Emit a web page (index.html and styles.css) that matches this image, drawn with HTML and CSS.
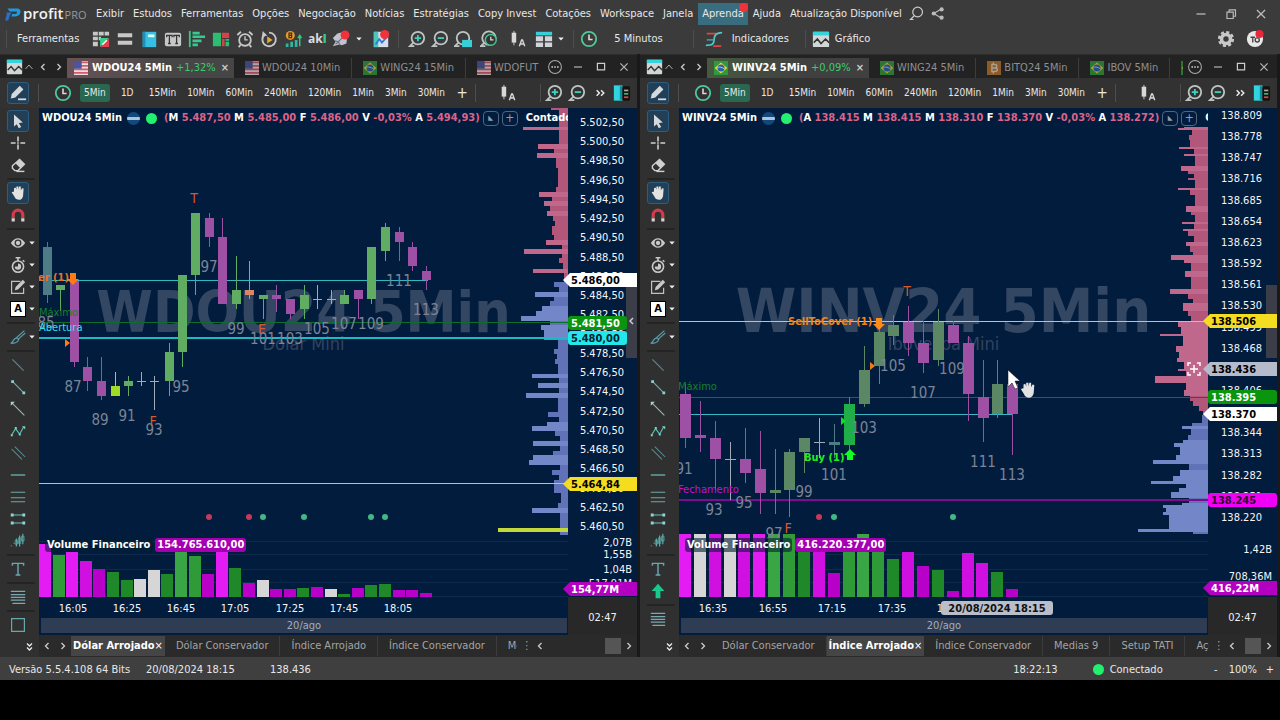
FILE: index.html
```html
<!DOCTYPE html>
<html lang="pt-BR">

<head>
    <meta charset="UTF-8">
    <meta name="viewport" content="width=device-width, initial-scale=1">
    <title>Profit Pro</title>
    <link rel="stylesheet" href="styles.css">
</head>

<body>
    <svg class="sprite" aria-hidden="true">
        <symbol id="logo" viewBox="0 0 20 20"><path d="M3 3h12c4 0 5 3 4 6s-4 4-7 4H8l1-3h4c2 0 3-3 1-3H6z" fill="#1e9be0"/><path d="M2 8h6l-2 4-2 6H0l2-6z" fill="#2a6fd0"/></symbol>
        <symbol id="search" viewBox="0 0 20 20"><g fill="none" stroke="#ccc" stroke-width="1.6"><circle cx="11.5" cy="8" r="6.5"/><path d="M7 13L2 18h4"/></g></symbol>
        <symbol id="share" viewBox="0 0 20 20"><path d="M15 4L5 10l10 6" fill="none" stroke="#bbb" stroke-width="1.6"/><g fill="#bbb"><circle cx="15.5" cy="4.5" r="2.8"/><circle cx="5" cy="10" r="2.8"/><circle cx="15.5" cy="15.5" r="2.8"/></g></symbol>
        <symbol id="min" viewBox="0 0 20 20"><path d="M5 10h10" stroke="#bbb" stroke-width="1.4"/></symbol>
        <symbol id="max" viewBox="0 0 20 20"><path d="M5.5 5.5h9v8h-9z" fill="none" stroke="#ccc" stroke-width="1.5"/></symbol>
        <symbol id="restore" viewBox="0 0 20 20"><path d="M5.5 8h7v7h-7zM8 8V5.5h7v7h-2.500" fill="none" stroke="#bbb" stroke-width="1.3"/></symbol>
        <symbol id="close" viewBox="0 0 20 20"><path d="M5.5 5.5l9 9m0-9l-9 9" stroke="#bbb" stroke-width="1.4"/></symbol>
        <symbol id="dots" viewBox="0 0 20 20"><circle cx="10" cy="10" r="8" fill="none" stroke="#aaa" stroke-width="1.3"/><path d="M5.5 9.200h2v1.800h-2zm3.500 0h2v1.800H9zm3.500 0h2v1.800h-2z" fill="#ccc"/></symbol>
        <symbol id="boxes" viewBox="0 0 20 20"><path d="M1 2h5.500v4H1zM7.500 2H13v4H7.500zM14 2h5v4h-5zM1 7.500h5.500v4H1zM1 13h5.500v5H1zM7.500 7.500H10v4H7.500z" fill="#c8c8c8"/><path d="M9 9h10L9 19z" fill="#35d08c"/><path d="M19 9v10H9z" fill="#e2404c"/><path d="M11.5 16.500l5-5" stroke="#fff" stroke-width="1.5"/></symbol>
        <symbol id="rows" viewBox="0 0 20 20"><path d="M2 3.5h16v4.500H2zM2 12h16v4.500H2z" fill="#c8c8c8"/></symbol>
        <symbol id="book" viewBox="0 0 20 20"><path d="M3 2h15v17H3z" fill="#36bfe2"/><path d="M3 2h3v17H3z" fill="#1f8fb8"/><path d="M9 5h7v3H9z" fill="#e8ffff"/></symbol>
        <symbol id="tt" viewBox="0 0 20 20"><rect x="1" y="3" width="18" height="15" rx="2" fill="#c8c8c8"/><path d="M3 8V6h6v2M6 6v9M4.5 15h3M11 8V6h6v2M14 6v9M12.5 15h3" stroke="#333" stroke-width="1.4" fill="none"/></symbol>
        <symbol id="bars" viewBox="0 0 20 20"><path d="M2 1v18" stroke="#36c98a" stroke-width="2"/><path d="M5 2h8v3H5zM5 6h14v3H5zM5 10.5h10v3H5zM5 15h6v3H5z" fill="#38c990"/></symbol>
        <symbol id="heat" viewBox="0 0 20 20"><path d="M1 3h9v15H1zM15 13h4v5h-4z" fill="#2dbd71"/><path d="M11 3h8v6h-8zM11 10h3v8h-3z" fill="#d8404c"/><path d="M15 10h4v2h-4z" fill="#2dbd71"/></symbol>
        <symbol id="alarm" viewBox="0 0 20 20"><g fill="none" stroke="#c8c8c8" stroke-width="2"><circle cx="10" cy="11" r="6.5"/><path d="M1.5 5.500l4-3.500M18.500 5.500l-4-3.500M5 16.500l-2 2.500M15 16.500l2 2.500"/><path d="M10 7v4h3" stroke-width="1.5"/></g></symbol>
        <symbol id="replay" viewBox="0 0 20 20"><path d="M5 5a7.500 7.500 0 1 0 5-2" fill="none" stroke="#c8c8c8" stroke-width="2"/><path d="M3 1l5 5-6 2z" fill="#c8c8c8"/><path d="M8 7l6 4-6 4z" fill="#e0a93c"/></symbol>
        <symbol id="coin" viewBox="0 0 20 20"><circle cx="7" cy="6" r="5" fill="#e59a2c"/><path d="M5.5 3.500h3v5h-3zM5.500 6h3" fill="none" stroke="#3a2a10" stroke-width="1.2"/><path d="M2 15h3v4H2zM7 13h3v6H7zM12 11h3v8h-3z" fill="#33b5a0"/><path d="M17.5 18V7m-2 2l2-3 2 3" stroke="#38c97c" stroke-width="1.6" fill="none"/></symbol>
        <symbol id="rocket" viewBox="0 0 20 20"><path d="M1 18l3-5-3-4 5-5 8-2 3 5-1 8-5 2-3-1z" fill="#bfc4d0"/><path d="M4 16l7-7M3 12l4 1 2 4" stroke="#6a7282" stroke-width="1.3" fill="none"/><circle cx="14.5" cy="5.5" r="5" fill="#f0323c"/></symbol>
        <symbol id="news" viewBox="0 0 20 20"><path d="M2 2h16v17H2z" fill="#d9dfe8"/><path d="M2 2h5v17H2z" fill="#4cc6b8"/><path d="M4 16l4-6 3 4 6-7" stroke="#2d7be0" stroke-width="2" fill="none"/><circle cx="14" cy="5" r="5" fill="#f0323c"/></symbol>
        <symbol id="zoomin" viewBox="0 0 20 20"><g fill="none" stroke="#bfc4c4" stroke-width="2"><circle cx="11" cy="9" r="7"/><path d="M6 14l-4 4h5"/></g><path d="M11 5.5v7M7.5 9h7" stroke="#3cd0c0" stroke-width="2"/></symbol>
        <symbol id="zoomout" viewBox="0 0 20 20"><g fill="none" stroke="#bfc4c4" stroke-width="2"><circle cx="11" cy="9" r="7"/><path d="M6 14l-4 4h5"/></g><path d="M7.5 9h7" stroke="#3cd0c0" stroke-width="2"/></symbol>
        <symbol id="zoombox" viewBox="0 0 20 20"><g fill="none" stroke="#bfc4c4" stroke-width="2"><circle cx="10" cy="9" r="7"/><path d="M5 14l-4 4h5"/></g><path d="M9 11h11v8H9z" fill="#38d0d8"/></symbol>
        <symbol id="zoomclock" viewBox="0 0 20 20"><g fill="none" stroke="#bfc4c4" stroke-width="2"><circle cx="10" cy="9" r="7.5"/><path d="M5 14l-4 4h5"/></g><circle cx="12" cy="11" r="6" fill="#333" stroke="#3cc98e" stroke-width="1.6"/><path d="M12 7.500V11h3" stroke="#ddd" stroke-width="1.4" fill="none"/></symbol>
        <symbol id="candle" viewBox="0 0 20 20"><path d="M5.5 1v16" stroke="#d8d8d8"/><path d="M3 3h5v11H3z" fill="#d8d8d8"/><path d="M11.5 18l2.500-7h1l2.500 7M12.500 15.500h4" stroke="#d8d8d8" stroke-width="1.5" fill="none"/></symbol>
        <symbol id="grid" viewBox="0 0 20 20"><path d="M1 2h18v4H1z" fill="#38d0d8"/><path d="M1 7h8v5.500H1zM11 7h8v5.500h-8zM1 14h8v5H1zM11 14h8v5h-8z" fill="#d0d4d8"/></symbol>
        <symbol id="clock" viewBox="0 0 20 20"><circle cx="10" cy="10" r="8" fill="none" stroke="#4fc99a" stroke-width="2"/><path d="M10 5v5.500h4" stroke="#d8d8d8" stroke-width="1.8" fill="none"/></symbol>
        <symbol id="indic" viewBox="0 0 20 20"><path d="M2 4h11M9 18h9" stroke="#d8484c" stroke-width="2"/><path d="M1 17c7 0 9-1 9-6s2-8 9-8" fill="none" stroke="#50c8c8" stroke-width="2"/><path d="M2 11h8" fill="none" stroke="#4aa8b8" stroke-width="1.5"/></symbol>
        <symbol id="chart" viewBox="0 0 20 20"><rect x="1" y="2" width="18" height="17" rx="1" fill="#d2d6d6"/><path d="M1 2h18v4H1z" fill="#35d3da"/><path d="M2 14l4-4 4 5 5-5 4 4" stroke="#333" stroke-width="1.7" fill="none"/></symbol>
        <symbol id="gear" viewBox="0 0 20 20"><circle cx="10" cy="10" r="5" fill="none" stroke="#c8c8c8" stroke-width="4"/><circle cx="10" cy="10" r="7.5" fill="none" stroke="#c8c8c8" stroke-width="3" stroke-dasharray="3.4 2.49"/></symbol>
        <symbol id="user" viewBox="0 0 20 20"><circle cx="10" cy="10" r="9" fill="#e8e8e8"/><path d="M5 8h5M7.500 8v6" stroke="#444" stroke-width="1.5"/><circle cx="12.5" cy="11" r="2.3" fill="none" stroke="#444" stroke-width="1.5"/><circle cx="15" cy="4.5" r="4.5" fill="#e8283a"/></symbol>
        <symbol id="us" viewBox="0 0 20 20"><path d="M0 0h20v20H0z" fill="#e9dfe4"/><path d="M0 2h20M0 7h20M0 12h20M0 17h20" stroke="#d65a68" stroke-width="2.4"/><path d="M0 0h11v11H0z" fill="#4c559c"/></symbol>
        <symbol id="br" viewBox="0 0 20 20"><path d="M0 0h20v20H0z" fill="#2f9a3c"/><path d="M10 2l9 8-9 8-9-8z" fill="#e8d83a"/><circle cx="10" cy="10" r="5" fill="#2b5fae"/><path d="M5.5 9c3-1 6 0 9 2" stroke="#dfe" fill="none"/></symbol>
        <symbol id="btc" viewBox="0 0 20 20"><path d="M0 0h20v20H0z" fill="#b8742e"/><path d="M7 4v12M7 5h4c4 0 4 5 0 5H7m4 0c5 0 5 5 0 5H7M9 2v3M9 15v3" stroke="#e8d2b8" stroke-width="2" fill="none"/></symbol>
        <symbol id="left" viewBox="0 0 20 20"><path d="M13 4l-6 6 6 6" fill="none" stroke="#ccc" stroke-width="2.6"/></symbol>
        <symbol id="right" viewBox="0 0 20 20"><path d="M7 4l6 6-6 6" fill="none" stroke="#ccc" stroke-width="2.6"/></symbol>
        <symbol id="up" viewBox="0 0 20 20"><path d="M3 14l7-8 7 8" fill="none" stroke="#aaa" stroke-width="2"/></symbol>
        <symbol id="more" viewBox="0 0 20 20"><path d="M3 4l5 5-5 5M11 4l5 5-5 5" fill="none" stroke="#eee" stroke-width="2.6"/></symbol>
        <symbol id="panel" viewBox="0 0 20 20"><path d="M1 1h10v18H1z" fill="#2fd6e0"/><path d="M8 2h3v16H8z" fill="#128a98"/><rect x="11" y="2" width="9" height="17" rx="2" fill="#16120f"/><path d="M13 7h5" stroke="#aaa" stroke-width="2"/><path d="M13 11h5" stroke="#38b870" stroke-width="2"/><path d="M13 15h5" stroke="#e04848" stroke-width="2"/></symbol>
        <symbol id="caret" viewBox="0 0 20 20"><path d="M1 5h18l-9 10z" fill="#eee"/></symbol>
        <symbol id="pencil" viewBox="0 0 20 20"><path d="M2 16l1-5L12 2l4 4-9 9z" fill="#d5d9dc"/><path d="M10 17h9" stroke="#d5d9dc" stroke-width="2"/></symbol>
        <symbol id="arrow" viewBox="0 0 20 20"><path d="M5 2l11 10-5 .5 3 5-3 1.5-2.500-5L5 17z" fill="#d8d8d8"/></symbol>
        <symbol id="cross" viewBox="0 0 20 20"><path d="M10 2v6M10 12v6M1 10h6M13 10h6" stroke="#d0d0d0" stroke-width="2"/><path d="M9 9h2v2H9z" fill="#d0d0d0"/></symbol>
        <symbol id="eraser" viewBox="0 0 20 20"><path d="M3 11l9-8 6 6-8 8H6l-3-3z" fill="none" stroke="#d0d0d0" stroke-width="1.8"/><path d="M7 8l5-5 6 6-5 5z" fill="#d0d0d0"/><path d="M8 18h10" stroke="#d0d0d0" stroke-width="1.8"/></symbol>
        <symbol id="hand" viewBox="0 0 20 20"><path d="M2 9l3-1V4l2-1 1 3V2h2.500v4l1-4h2v5l1.500-3 2 .5-.5 7c0 4-2 7-5 7s-5-1-6-4z" fill="#e2e2e2"/></symbol>
        <symbol id="magnet" viewBox="0 0 20 20"><path d="M4 14v-4a6 6 0 0 1 12 0v4" fill="none" stroke="#d23c4c" stroke-width="4"/><path d="M2 14h4v4H2zM14 14h4v4h-4z" fill="#d0d0d0"/></symbol>
        <symbol id="eye" viewBox="0 0 20 20"><path d="M1 10c5-8 13-8 18 0-5 8-13 8-18 0z" fill="#c8c8c8"/><circle cx="10" cy="10" r="3.5" fill="#c8c8c8" stroke="#333" stroke-width="1.6"/></symbol>
        <symbol id="watch" viewBox="0 0 20 20"><circle cx="10" cy="12" r="7" fill="none" stroke="#c8c8c8" stroke-width="2"/><path d="M7 1h6M10 1v4M16 4l2 2" stroke="#c8c8c8" stroke-width="2"/><path d="M10 12V8a4 4 0 1 1-4 4z" fill="#c8c8c8"/></symbol>
        <symbol id="note" viewBox="0 0 20 20"><path d="M13 3H2v15h15v-7" fill="none" stroke="#c0c0c0" stroke-width="1.5"/><path d="M6 14l1-4 9-9 3 3-9 9z" fill="#c8c8c8"/></symbol>
        <symbol id="brush" viewBox="0 0 20 20"><path d="M18 2L8 11M19 5l-9 8" stroke="#5a9aa8" stroke-width="1.5"/><path d="M8 11l3 2c-1 4-5 5-10 5 3-1 3-6 7-7z" fill="none" stroke="#5a9aa8" stroke-width="1.5"/></symbol>
        <symbol id="line" viewBox="0 0 20 20"><path d="M3 3l14 14" stroke="#5a8f98" stroke-width="1.3"/></symbol>
        <symbol id="segment" viewBox="0 0 20 20"><path d="M3 3l14 14" stroke="#6fb0b4" stroke-width="1.3"/><path d="M1.5 1.5H5V5H1.500zM15.500 15.500H19V19h-3.500z" fill="#86d0d0"/></symbol>
        <symbol id="ray" viewBox="0 0 20 20"><path d="M3 3l15 15" stroke="#a0b8b8" stroke-width="1.3"/><path d="M1 1h5L1 6z" fill="#b8d0d0"/></symbol>
        <symbol id="zigzag" viewBox="0 0 20 20"><path d="M2 15l5-8 5 7 5-9" fill="none" stroke="#5fb8b0" stroke-width="1.5"/><path d="M1 14h2.500v2.500H1zM6 5h2.500v2.500H6zM11 13h2.500v2.500H11zM15 4h4v4z" fill="#7fd0c8"/></symbol>
        <symbol id="channel" viewBox="0 0 20 20"><path d="M2 5l13 13M6 2l13 13" stroke="#5a8f98" stroke-width="1.3"/></symbol>
        <symbol id="hline" viewBox="0 0 20 20"><path d="M1 10h18" stroke="#6fc0c0" stroke-width="1.5"/></symbol>
        <symbol id="hlines" viewBox="0 0 20 20"><path d="M1 4h18M1 11h18M1 16h18" stroke="#6fa8a8" stroke-width="1.4"/></symbol>
        <symbol id="range" viewBox="0 0 20 20"><path d="M2 5h16M2 15h16" stroke="#6fc0c0" stroke-width="1.4"/><path d="M1 3h3.500v4H1zM15.500 3H19v4h-3.500zM1 13h3.500v4H1zM15.500 13H19v4h-3.500z" fill="#8fd8d8"/></symbol>
        <symbol id="waves" viewBox="0 0 20 20"><path d="M1 16h1M4.5 13h1M8 7v10M12 3v14M16 1v13" stroke="#5aa8a8" stroke-width="1.5"/><path d="M6.5 9h3v5h-3zM10.500 6h3v7h-3zM14.500 4h3v6h-3z" fill="none" stroke="#5aa8a8"/></symbol>
        <symbol id="text" viewBox="0 0 20 20"><path d="M3 6V3h14v3M10 3v14M7 17.500h6" fill="none" stroke="#68a8b0" stroke-width="1.8"/></symbol>
        <symbol id="fib" viewBox="0 0 20 20"><path d="M1 3h18M1 7h18M1 10.500h18M1 14h18M3 18h16" stroke="#78a8b0" stroke-width="1.5"/></symbol>
        <symbol id="square" viewBox="0 0 20 20"><path d="M2 2h16v16H2z" fill="none" stroke="#68a8a8" stroke-width="1.5"/></symbol>
        <symbol id="greenup" viewBox="0 0 20 20"><path d="M10 1l8 9h-5v9H7v-9H2z" fill="#17c98a"/></symbol>
    </svg>

    <header>
        <nav class="menu">
            <svg class="logo"><use href="#logo"/></svg>
            <span class="brand">profit<small>PRO</small></span>
            <button>Exibir</button>
            <button>Estudos</button>
            <button>Ferramentas</button>
            <button>Opções</button>
            <button>Negociação</button>
            <button>Notícias</button>
            <button>Estratégias</button>
            <button>Copy Invest</button>
            <button>Cotações</button>
            <button>Workspace</button>
            <button>Janela</button>
            <button class="learn">Aprenda</button>
            <button>Ajuda</button>
            <button>Atualização Disponível</button>
            <button class="icon" aria-label="Buscar"><svg><use href="#search"/></svg></button>
            <button class="icon" aria-label="Compartilhar"><svg><use href="#share"/></svg></button>
            <span class="space"></span>
            <button class="win" aria-label="Minimizar"><svg><use href="#min"/></svg></button>
            <button class="win" aria-label="Restaurar"><svg><use href="#restore"/></svg></button>
            <button class="win" aria-label="Fechar"><svg><use href="#close"/></svg></button>
        </nav>
        <div class="toolbar">
            <i class="sep"></i>
            <button class="label first">Ferramentas</button>
            <div class="group">
                <button aria-label="Grade"><svg><use href="#boxes"/></svg></button>
                <button aria-label="Boleta"><svg><use href="#rows"/></svg></button>
                <button aria-label="Livro"><svg><use href="#book"/></svg></button>
                <button aria-label="Times and trades"><svg><use href="#tt"/></svg></button>
                <button aria-label="Volume"><svg><use href="#bars"/></svg></button>
                <button aria-label="Mapa"><svg><use href="#heat"/></svg></button>
                <button aria-label="Alarme"><svg><use href="#alarm"/></svg></button>
                <button aria-label="Replay"><svg><use href="#replay"/></svg></button>
                <button aria-label="Moedas"><svg><use href="#coin"/></svg></button>
                <button class="akl">ak<b>l</b></button>
                <button aria-label="Foguete"><svg><use href="#rocket"/></svg></button>
                <button class="drop" aria-label="Mais"><svg><use href="#caret"/></svg></button>
            </div>
            <button aria-label="Relatório"><svg><use href="#news"/></svg></button>
            <i class="sep"></i>
            <button aria-label="Aumentar"><svg><use href="#zoomin"/></svg></button>
            <button aria-label="Diminuir"><svg><use href="#zoomout"/></svg></button>
            <button aria-label="Zoom na área"><svg><use href="#zoombox"/></svg></button>
            <button class="wide" aria-label="Zoom no tempo"><svg><use href="#zoomclock"/></svg></button>
            <button class="wide" aria-label="Tipo de gráfico"><svg><use href="#candle"/></svg></button>
            <button aria-label="Layout"><svg><use href="#grid"/></svg></button>
            <button class="drop" aria-label="Mais layouts"><svg><use href="#caret"/></svg></button>
            <i class="sep"></i>
            <button class="label period"><svg><use href="#clock"/></svg>5 Minutos</button>
            <i class="sep"></i>
            <button class="label indicators"><svg><use href="#indic"/></svg>Indicadores</button>
            <i class="sep"></i>
            <button class="label chart"><svg><use href="#chart"/></svg>Gráfico</button>
            <span class="space"></span>
            <button class="wide" aria-label="Configurações"><svg><use href="#gear"/></svg></button>
            <button class="wide" aria-label="Conta"><svg><use href="#user"/></svg></button>
        </div>
    </header>

    <main>
        <section class="panel" data-chart="wdo">
            <div class="tabs">
                <button class="nav chart" aria-label="Gráfico"><svg><use href="#chart"/></svg></button>
                <button class="nav small" aria-label="Subir"><svg><use href="#up"/></svg></button>
                <button class="nav" aria-label="Anterior"><svg><use href="#left"/></svg></button>
                <button class="nav" aria-label="Próximo"><svg><use href="#right"/></svg></button>
                <div class="tab-list">
                    <button class="tab active us"><svg><use href="#us"/></svg>WDOU24 5Min <em>+1,32%</em><span>×</span></button>
                    <button class="tab"><svg><use href="#us"/></svg>WDOU24 10Min</button>
                    <button class="tab"><svg><use href="#br"/></svg>WING24 15Min</button>
                    <button class="tab"><svg><use href="#us"/></svg>WDOFUT</button>
                </div>
                <div class="controls"></div>
            </div>
            <div class="timeframes"></div>
            <div class="body">
                <aside></aside>
                <div class="plot">
                    <div class="info">
                        <strong>WDOU24 5Min</strong><i class="badge"></i><i class="live"></i>
                        <p>(<b>M</b> 5.487,50 <b>M</b> 5.485,00 <b>F</b> 5.486,00 <b>V</b> -0,03% <b>A</b> 5.494,93)</p>
                        <button aria-label="Recolher">◣</button><button aria-label="Adicionar">+</button>
                        <strong class="study">Contador</strong>
                    </div>
                    <svg class="drawing"></svg>
                    <div class="volume"><b>Volume Financeiro</b><b class="value">154.765.610,00</b></div>
                    <svg class="hours"></svg>
                    <div class="day">20/ago</div>
                </div>
                <div class="axis">
                    <svg></svg>
                    <time>02:47</time>
                </div>
                <div class="sheets">
                    <button class="nav" aria-label="Anterior"><svg><use href="#left"/></svg></button>
                    <button class="nav" aria-label="Próximo"><svg><use href="#right"/></svg></button>
                    <div class="sheet-list">
                        <button class="active">Dólar Arrojado<span>×</span></button>
                        <button>Dólar Conservador</button>
                        <button>Índice Arrojado</button>
                        <button>Índice Conservador</button>
                        <button>Medias 9</button>
                    </div>
                    <div class="scroll"></div>
                </div>
            </div>
        </section>

        <section class="panel" data-chart="win">
            <div class="tabs">
                <button class="nav chart" aria-label="Gráfico"><svg><use href="#chart"/></svg></button>
                <button class="nav small" aria-label="Subir"><svg><use href="#up"/></svg></button>
                <button class="nav" aria-label="Anterior"><svg><use href="#left"/></svg></button>
                <button class="nav" aria-label="Próximo"><svg><use href="#right"/></svg></button>
                <div class="tab-list">
                    <button class="tab active br"><svg><use href="#br"/></svg>WINV24 5Min <em>+0,09%</em><span>×</span></button>
                    <button class="tab"><svg><use href="#br"/></svg>WING24 5Min</button>
                    <button class="tab"><svg><use href="#btc"/></svg>BITQ24 5Min</button>
                    <button class="tab"><svg><use href="#br"/></svg>IBOV 5Min</button>
                    <button class="tab" aria-label="Próxima aba"><svg><use href="#br"/></svg></button>
                </div>
                <div class="controls"></div>
            </div>
            <div class="timeframes"></div>
            <div class="body">
                <aside></aside>
                <div class="plot">
                    <div class="info">
                        <strong>WINV24 5Min</strong><i class="badge"></i><i class="live"></i>
                        <p>(<b>A</b> 138.415 <b>M</b> 138.415 <b>M</b> 138.310 <b>F</b> 138.370 <b>V</b> -0,03% <b>A</b> 138.272)</p>
                        <button aria-label="Recolher">◣</button><button aria-label="Adicionar">+</button>
                        <strong class="study">Contador</strong>
                    </div>
                    <svg class="drawing"></svg>
                    <div class="volume"><b>Volume Financeiro</b><b class="value">416.220.377,00</b></div>
                    <svg class="hours"></svg>
                    <div class="day">20/ago</div>
                </div>
                <div class="axis">
                    <svg></svg>
                    <time>02:47</time>
                </div>
                <div class="sheets">
                    <button class="nav" aria-label="Anterior"><svg><use href="#left"/></svg></button>
                    <button class="nav" aria-label="Próximo"><svg><use href="#right"/></svg></button>
                    <div class="sheet-list">
                        <button>Dólar Conservador</button>
                        <button class="active">Índice Arrojado<span>×</span></button>
                        <button>Índice Conservador</button>
                        <button>Medias 9</button>
                        <button>Setup TATI</button>
                        <button>Açoes</button>
                    </div>
                    <div class="scroll"></div>
                </div>
            </div>
        </section>
    </main>

    <footer>
        <span class="version">Versão 5.5.4.108 64 Bits</span>
        <span class="date">20/08/2024 18:15</span>
        <span>138.436</span>
        <span class="space"></span>
        <span class="hour">18:22:13</span>
        <i class="live"></i>
        <span class="status">Conectado</span>
        <button>-</button>
        <span>100%</span>
        <button>+</button>
    </footer>

    <template id="timeframes">
        <button class="tool on" aria-label="Desenhar"><svg><use href="#pencil"/></svg></button>
        <i class="sep"></i>
        <button class="clock" aria-label="Periodicidade"><svg><use href="#clock"/></svg></button>
        <button class="on">5Min</button>
        <button>1D</button>
        <button>15Min</button>
        <button>10Min</button>
        <button>60Min</button>
        <button>240Min</button>
        <button>120Min</button>
        <button>1Min</button>
        <button>3Min</button>
        <button>30Min</button>
        <button class="plus">+</button>
        <i class="sep"></i>
        <span class="space"></span>
        <button class="pic" aria-label="Candles"><svg><use href="#candle"/></svg></button>
        <span class="space"></span>
        <i class="sep"></i>
        <button class="pic" aria-label="Aumentar"><svg><use href="#zoomin"/></svg></button>
        <button class="pic" aria-label="Diminuir"><svg><use href="#zoomout"/></svg></button>
        <button class="pic more" aria-label="Mais"><svg><use href="#more"/></svg></button>
        <button class="pic last" aria-label="Painel"><svg><use href="#panel"/></svg></button>
    </template>

    <template id="controls">
        <button aria-label="Mais abas"><svg><use href="#dots"/></svg></button>
        <button aria-label="Minimizar"><svg><use href="#min"/></svg></button>
        <button aria-label="Maximizar"><svg><use href="#max"/></svg></button>
        <button aria-label="Fechar"><svg><use href="#close"/></svg></button>
    </template>

    <template id="scroll">
        <span>⋮</span>
        <button class="nav" aria-label="Rolar à esquerda"><svg><use href="#left"/></svg></button>
        <span class="space"></span>
        <i class="thumb"></i>
        <button class="nav" aria-label="Rolar à direita"><svg><use href="#right"/></svg></button>
    </template>

    <script src="script.js"></script>
</body>

</html>
```
FILE: styles.css
```css
* {
    box-sizing: border-box;
}

body {
    margin: 0;
    background: #000;
    color: #e8e8e8;
    font-family: "DejaVu Sans Condensed", "DejaVu Sans", sans-serif;
    font-size: 11px;
    line-height: 16px;
}

button {
    display: flex;
    align-items: center;
    justify-content: center;
    flex: none;
    margin: 0;
    padding: 0;
    border: 0;
    background: none;
    color: inherit;
    font: inherit;
    white-space: nowrap;
}

svg {
    display: block;
    flex: none;
    width: 18px;
    height: 18px;
}

.sprite {
    position: absolute;
    width: 0;
    height: 0;
}

.space {
    flex: 1;
}

.sep {
    flex: none;
    width: 1px;
    height: 18px;
    background: #4e4e4e;
}

/* Topo */
header {
    padding-bottom: 3px;
    background: #3b3b3b;
}

.menu {
    display: flex;
    align-items: center;
    gap: 1px;
    height: 27px;
    padding: 0 5px;
}

.menu button {
    height: 22px;
    padding: 0 4px;
}

.menu .logo {
    width: 16px;
    height: 16px;
}

.brand {
    width: 69px;
    padding-left: 1px;
    color: #f2f2f2;
    font-family: "Open Sans", sans-serif;
    font-size: 15px;
    font-weight: 600;
}

.brand small {
    padding-left: 1px;
    color: #999;
    font-size: 11px;
    font-weight: 400;
}

.menu .learn {
    position: relative;
    background: #3a6c80;
}

.learn::after {
    content: "";
    position: absolute;
    top: 0;
    right: 0;
    width: 9px;
    height: 9px;
    border-radius: 50%;
    background: #f0323c;
}

.menu .icon {
    width: 20px;
    padding: 0;
}

.menu .icon svg {
    width: 15px;
    height: 15px;
}

.menu .win {
    width: 29px;
    padding: 0;
}

.toolbar {
    display: flex;
    align-items: center;
    height: 24px;
    padding-right: 11px;
}

.toolbar .sep {
    margin: 0 6px;
}

.toolbar button {
    width: 23px;
    height: 22px;
}

.toolbar .group {
    display: flex;
    margin-right: 4px;
}

.toolbar .group button {
    width: 24px;
}

.toolbar .wide {
    width: 29px;
}

.toolbar .drop,
.toolbar .group .drop {
    width: 12px;
}

.toolbar .drop svg {
    width: 6px;
    height: 6px;
}

.toolbar .label {
    width: auto;
}

.toolbar .first {
    padding: 0 10px 0 4px;
}

.toolbar .period {
    gap: 16px;
    padding-right: 24px;
}

.toolbar .indicators {
    gap: 9px;
    padding: 0 10px 0 5px;
}

.toolbar .chart {
    gap: 5px;
}

.toolbar .akl {
    color: #ddd;
    font-family: "Open Sans", sans-serif;
    font-weight: 700;
    font-size: 12px;
}

.akl b {
    color: #38c990;
}

/* Painéis */
main {
    display: grid;
    grid-template-columns: 1fr 1fr;
    gap: 3px;
    padding-right: 3px;
    background: #191919;
}

.panel {
    min-width: 0;
    background: #303030;
}

.tabs {
    display: flex;
    align-items: center;
    height: 24px;
    padding-left: 5px;
    border-top: 1px solid #2c2c2c;
    background: #222;
}

.nav {
    width: 16px;
    height: 20px;
}

.nav svg {
    width: 10px;
    height: 10px;
}

.tabs .chart {
    width: 18px;
}

.tabs .chart svg {
    width: 17px;
    height: 17px;
}

.tabs .small {
    width: 12px;
}

.tab-list {
    display: flex;
    flex: 1;
    align-items: end;
    align-self: stretch;
    overflow: hidden;
    min-width: 0;
}

.tab {
    gap: 3px;
    height: 20px;
    padding: 0 11px;
    color: #8f8f8f;
}

.tab svg {
    width: 14px;
    height: 14px;
    opacity: .7;
}

.tab + .tab + .tab {
    border-left: 1px solid #3c3c3c;
}

.tab.active {
    gap: 4px;
    padding: 0 5px 0 7px;
    background: #464646;
    color: #fff;
    font-weight: 700;
}

.tab.us {
    background: linear-gradient(90deg, #6a5357, #464646 60%);
}

.tab.br {
    background: linear-gradient(90deg, #475a40, #404040 60%);
}

.tab.active svg {
    opacity: 1;
}

.tab em {
    color: #3ccc6c;
    font-style: normal;
    font-weight: 400;
}

.tab span {
    padding-left: 1px;
    color: #ccc;
}

.controls {
    display: flex;
    padding-right: 2px;
}

.controls button {
    width: 23px;
}

.controls svg {
    width: 16px;
    height: 16px;
}

.timeframes {
    display: flex;
    align-items: center;
    gap: 3px;
    height: 30px;
    padding: 0 7px;
    background: #323232;
    font-size: 10px;
}

.timeframes button {
    height: 18px;
    min-width: 29px;
    padding: 0 4px;
    border-radius: 3px;
}

.timeframes button.on {
    background: #2a6750;
}

.timeframes .tool + .sep {
    margin: 0 6px;
}

.timeframes .pic {
    min-width: 20px;
    padding: 0;
}

.timeframes .more svg {
    width: 11px;
    height: 11px;
}

.timeframes .last {
    min-width: 16px;
}

.timeframes .last svg {
    width: 17px;
}

.timeframes .plus {
    min-width: 20px;
    font-size: 15px;
}

.timeframes .tool,
aside .tool {
    width: 22px;
    min-width: 22px;
    height: 22px;
    padding: 0;
}

.timeframes .tool.on,
aside .tool.on {
    border: 1px solid #2d5d80;
    border-radius: 3px;
    background: #213f57;
}

.body {
    display: grid;
    grid-template-columns: 39px 1fr 69px;
}

aside {
    position: relative;
    grid-row: span 2;
    padding: 2px 0 0 7px;
    background: #303030;
}

aside hr {
    width: 28px;
    height: 2px;
    margin: 2px 0;
    border: 0;
    background: #242424;
}

aside div {
    display: flex;
    align-items: center;
}

aside svg {
    width: 16px;
    height: 16px;
}

aside .drop svg {
    width: 6px;
    height: 6px;
}

aside .letter {
    width: 16px;
    height: 16px;
    border: 1px solid #000;
    background: #fff;
    color: #000;
    font-weight: 700;
    line-height: 13px;
}

aside .last {
    position: absolute;
    right: 4px;
    bottom: 4px;
    width: 12px;
    height: 12px;
}

aside .last svg {
    width: 10px;
    height: 10px;
    transform: rotate(90deg);
}

/* Gráfico */
.plot,
.axis {
    position: relative;
    min-width: 0;
    background: #021c3d;
}

.plot {
    overflow: hidden;
}

.info {
    position: absolute;
    top: 2px;
    left: 3px;
    right: 0;
    display: flex;
    align-items: center;
    overflow: hidden;
    color: #fff;
    white-space: nowrap;
}

.info p {
    margin: 0;
    color: #dc6488;
    font-weight: 700;
}

.info p b {
    color: #fff;
}

.info button {
    width: 16px;
    height: 15px;
    margin-left: 3px;
    border: 1px solid #53657f;
    border-radius: 4px;
    color: #8fa0b4;
    font-size: 12px;
    line-height: 12px;
}

.info button:first-of-type {
    font-size: 7px;
}

.info .study {
    margin-left: 8px;
}

.badge {
    flex: none;
    width: 13px;
    height: 13px;
    margin: 0 6px 0 5px;
    border-radius: 50%;
    background: linear-gradient(#12487c 38%, #a8c4dc 38%, #a8c4dc 60%, #12487c 60%);
}

.live {
    flex: none;
    width: 11px;
    height: 11px;
    margin-right: 7px;
    border-radius: 50%;
    background: #24f070;
}

.drawing,
.axis svg {
    width: 100%;
    height: 489px;
}

.axis svg {
    overflow: visible;
}

.hours {
    width: 100%;
    height: 21px;
}

.day {
    height: 15px;
    margin: 0 1px 2px 2px;
    background: #2e3d54;
    color: #a3adbb;
    line-height: 15px;
    text-align: center;
}

.volume {
    position: absolute;
    top: 430px;
    left: 6px;
    display: flex;
    gap: 3px;
    color: #fff;
    line-height: 14px;
}

.volume b {
    padding: 0 2px;
    border-radius: 3px;
    background: rgba(4, 30, 50, .6);
}

.volume .value {
    background: #a400b2;
}

.axis time {
    display: block;
    height: 38px;
    background: #282828;
    color: #f0f0f0;
    line-height: 42px;
    text-align: center;
}

.drawing text,
.hours text,
.axis text {
    font-size: 11px;
    fill: #f4f6fa;
}

.hours text {
    text-anchor: middle;
}

.axis text {
    text-anchor: end;
}

.axis .tag,
.hours .tag,
.drawing .mark {
    font-weight: 700;
}

.axis .tag {
    text-anchor: start;
}

.drawing .count {
    font-size: 15px;
    text-anchor: middle;
    fill: #7c8496;
}

.drawing .letter {
    font-size: 14px;
    text-anchor: middle;
    fill: #d8582c;
}

.drawing .watermark {
    font-weight: 700;
    text-anchor: middle;
    fill: #334763;
}

.drawing .name {
    font-size: 18px;
    text-anchor: middle;
    fill: #32435f;
}

/* Abas inferiores */
.sheets {
    display: flex;
    grid-column: 2 / 4;
    align-items: center;
    height: 22px;
    min-width: 0;
    background: #2a2a2a;
    color: #a4a4a4;
}

.sheet-list {
    display: flex;
    flex: 1;
    overflow: hidden;
    min-width: 0;
}

.sheet-list button {
    height: 20px;
    padding: 0 11px;
    border-right: 1px solid #3c3c3c;
}

.sheet-list .active {
    padding: 0 2px;
    border: 0;
    background: #454545;
    color: #fff;
    font-weight: 700;
}

.sheet-list span {
    font-weight: 400;
}

.scroll {
    display: flex;
    align-items: center;
    width: 120px;
    padding-left: 5px;
}

[data-chart="win"] .scroll {
    width: 68px;
}

.thumb {
    width: 16px;
    height: 16px;
    background: #555;
}

/* Rodapé */
footer {
    display: flex;
    align-items: center;
    height: 23px;
    padding: 2px 3px 0 9px;
    background: #3f3f3f;
}

.version {
    width: 137px;
}

.date {
    width: 124px;
}

.hour {
    margin-right: 35px;
}

footer .live {
    margin-right: 6px;
}

.status {
    margin-right: 46px;
}

footer button {
    width: 14px;
}

footer button + span {
    padding: 0 6px;
}
```
FILE: script.js
```js
const PINK = "#b2567a", BLUE = "#6272b8";
const colors = {
    g: "#5fac62", p: "#9d50a4", t: "#4d7c84", l: "#9edc24", w: "#a0aab8", o: "#d88664",
    s: "#5c8765", b: "#1fae48",
    M: "#e41cf4", m: "#b800c8", n: "#cf10e0", G: "#3aa544", v: "#1f8828", h: "#2f9a38", W: "#d6d6d6"
};

// Candles: [x, color, high, open, close, low], volume: [top, color], profile: [y, width]
const charts = {
    wdo: {
        name: "WDOU24 5Min", company: "Dólar Mini", size: 57, markY: 224, step: 13.6, body: 9, bar: 12,
        candles: [[8, "t", 134, 139, 187, 195], [21, "g", 177, 177, 182, 203], [35, "p", 173, 173, 254, 259], [48, "p", 249, 259, 273, 283],
            [62, "p", 249, 273, 288, 292], [76, "l", 264, 278, 288, 288], [89, "g", 268, 273, 278, 288], [102, "w", 264, 273, 274, 278],
            [115, "w", 268, 273, 274, 302], [130, "g", 235, 244, 273, 288], [143, "g", 167, 167, 244, 259], [156, "g", 105, 105, 167, 187],
            [170, "p", 105, 110, 129, 139], [183, "p", 110, 129, 196, 196], [197, "g", 148, 182, 196, 201], [210, "o", 153, 182, 187, 191],
            [224, "g", 187, 187, 191, 211], [237, "p", 177, 187, 191, 204], [251, "p", 191, 191, 206, 211], [265, "g", 177, 187, 201, 211],
            [278, "w", 177, 191, 192, 201], [292, "w", 182, 191, 192, 196], [305, "g", 182, 187, 196, 196], [319, "p", 182, 182, 191, 211],
            [332, "g", 139, 139, 191, 196], [346, "g", 115, 119, 143, 153], [360, "p", 119, 124, 134, 153], [373, "p", 134, 139, 158, 163],
            [387, "p", 158, 163, 172, 182]],
        volume: [[436, "M"], [447, "h"], [444, "M"], [453, "n"], [461, "m"], [464, "v"], [472, "v"], [471, "W"], [462, "W"], [466, "v"],
            [444, "G"], [448, "h"], [466, "m"], [443, "M"], [460, "v"], [475, "m"], [472, "W"], [481, "m"], [481, "m"], [480, "v"],
            [479, "m"], [481, "W"], [486, "v"], [480, "m"], [477, "v"], [476, "v"], [482, "m"], [482, "m"], [485, "m"]],
        volumeStart: 0,
        counts: [[7, 215, 85], [34, 279, 87], [61, 312, 89], [88, 308, 91], [115, 322, 93], [142, 279, 95], [170, 159, 97], [197, 221, 99],
            [224, 231, 101], [251, 231, 103], [278, 221, 105], [305, 216, 107], [332, 216, 109], [360, 173, 111], [387, 202, 113]],
        letters: [[155, 90, "T"], [223, 221, "E"], [114, 313, "F"]],
        lines: [[172, "#31b7c4", 389], [214, "#0e6c2c"], [229, "#1dbac6", "100%", 2], [375, "#dccb30"]],
        texts: [[-1, 173, "er (1)", "#e8702c", "mark"], [0, 208, "Máximo", "#16802a"], [0, 223, "Abertura", "#30e0ec"]],
        downs: [[34, 165, "#ff7c10"]], ups: [], triangles: [[26, 235, "#ff7c10"]],
        dots: [[170, "#c43a5a"], [210, "#c43a5a"], [224, "#42b884"], [265, "#42b884"], [332, "#42b884"], [346, "#42b884"]],
        profile: [[0, 17], [2, 9], [19, 45], [22, 9], [36, 30], [41, 14], [45, 31], [50, 12], [60, 10], [79, 12], [84, 29], [89, 16], [93, 24],
            [98, 18], [103, 21], [108, 15], [113, 13], [118, 16], [127, 14], [132, 22], [137, 6], [141, 44], [146, 6], [150, 9], [155, 5],
            [161, 35], [165, 4], [174, 14], [179, 9], [184, 33], [189, 14], [193, 18], [198, 26], [203, 32], [208, 47], [213, 18], [217, 27],
            [222, 24], [232, 10], [241, 14], [246, 11], [251, 13], [256, 10], [266, 36], [270, 9], [275, 30], [280, 9], [285, 42], [290, 10],
            [304, 20], [309, 9], [314, 21], [318, 36], [323, 13], [328, 8], [333, 35], [338, 8], [343, 15], [347, 35], [352, 39], [357, 8],
            [362, 16], [367, 9], [372, 14], [385, 7], [395, 10], [400, 36], [405, 8], [427, 0]],
        turn: 170, peak: [420, 70],
        prices: ["5.502,50", "5.500,50", "5.498,50", "5.496,50", "5.494,50", "5.492,50", "5.490,50", "5.488,50", "5.486,50", "5.484,50",
            "5.482,50", "5.480,50", "5.478,50", "5.476,50", "5.474,50", "5.472,50", "5.470,50", "5.468,50", "5.466,50", "5.464,50",
            "5.462,50", "5.460,50"],
        priceStart: 14, priceStep: 19.24, priceX: 56,
        scale: [[434, "2,07B"], [446, "1,55B"], [461, "1,04B"], [475, "517,91M"]],
        tags: [[172, "5.486,00", "#fff", "#000", true], [215, "5.481,50", "#0b940e", "#fff"], [230, "5.480,00", "#22e8ea", "#042030"],
            [376, "5.464,84", "#f4dc20", "#000", true], [481, "154,77M", "#b400c0", "#fff", true]],
        thumb: [179, 71], fold: true,
        hours: [[34, "16:05"], [88, "16:25"], [142, "16:45"], [196, "17:05"], [251, "17:25"], [305, "17:45"], [359, "18:05"]]
    },
    win: {
        name: "WINV24 5Min", company: "Ibovespa Mini", size: 61, markY: 224, step: 14.87, body: 11, bar: 12,
        candles: [[6, "p", 276, 286, 330, 340], [21, "p", 293, 327, 330, 344], [36, "p", 313, 330, 351, 382], [51, "w", 334, 351, 352, 392],
            [66, "p", 320, 351, 365, 375], [81, "p", 323, 361, 385, 406], [96, "s", 341, 382, 385, 406], [110, "s", 341, 344, 382, 409],
            [125, "s", 330, 330, 344, 365], [140, "w", 310, 334, 335, 350], [155, "t", 316, 334, 337, 350], [170, "b", 289, 296, 337, 342],
            [185, "s", 238, 262, 296, 299], [200, "s", 219, 224, 258, 276], [214, "s", 207, 217, 228, 237], [229, "p", 198, 214, 235, 248],
            [244, "p", 213, 235, 255, 265], [259, "s", 201, 214, 252, 258], [274, "p", 213, 217, 235, 235], [289, "p", 228, 235, 286, 313],
            [304, "p", 252, 289, 310, 334], [318, "s", 252, 276, 306, 310], [333, "p", 276, 276, 306, 347]],
        volume: [[426, "M"], [426, "W"], [426, "n"], [426, "W"], [426, "n"], [426, "M"], [426, "G"], [426, "h"], [442, "v"], [442, "n"],
            [465, "m"], [442, "h"], [426, "G"], [442, "h"], [451, "v"], [444, "n"], [458, "m"], [462, "v"], [483, "m"], [445, "n"],
            [455, "n"], [464, "v"], [481, "m"]],
        volumeStart: 0,
        counts: [[5, 361, 91], [35, 402, 93], [65, 395, 95], [95, 426, 97], [125, 384, 99], [155, 367, 101], [185, 320, 103], [214, 258, 105],
            [244, 285, 107], [273, 261, 109], [304, 354, 111], [333, 367, 113]],
        letters: [[228, 183, "T"], [109, 420, "F"]],
        lines: [[213, "#d2d034"], [289, "#0e6c40"], [306, "#36b8c8", 333], [391, "#7c0c90", "100%", 2]],
        texts: [[109, 217, "SellToCover (1)", "#f08418", "mark"], [-1, 282, "Máximo", "#16802a"], [-1, 385, "Fechamento", "#cc0cd0"],
            [125, 353, "Buy (1)", "#20f020", "mark"]],
        downs: [[200, 210, "#ff8c18"]], ups: [[171, 341, "#10ff20"]], triangles: [[191, 258, "#f07c18"], [162, 313, "#10e020"]],
        dots: [[140, "#c43a5a"], [155, "#42b884"], [274, "#42b884"]],
        profile: [[19, 24], [20, 30], [22, 16], [27, 19], [32, 18], [39, 29], [41, 14], [46, 24], [48, 13], [58, 27], [63, 20], [66, 14],
            [70, 20], [72, 13], [80, 30], [82, 18], [87, 13], [98, 22], [104, 17], [107, 13], [114, 26], [116, 14], [121, 25], [123, 20],
            [128, 14], [134, 22], [138, 18], [144, 15], [147, 37], [152, 24], [155, 17], [163, 23], [169, 17], [181, 38], [186, 20],
            [191, 15], [195, 25], [203, 20], [208, 17], [213, 30], [219, 27], [226, 48], [228, 25], [238, 32], [244, 29], [250, 31],
            [254, 24], [261, 30], [263, 22], [268, 53], [275, 22], [282, 24], [288, 18], [293, 15], [298, 9], [303, 5], [307, 6], [315, 16],
            [318, 26], [321, 17], [327, 20], [332, 25], [335, 34], [339, 28], [347, 32], [352, 55], [356, 19], [362, 28], [368, 35],
            [373, 57], [376, 22], [380, 29], [384, 37], [390, 19], [395, 26], [397, 45], [400, 42], [404, 45], [407, 39], [421, 70],
            [424, 15], [426, 0]],
        turn: 306,
        prices: ["138.809", "138.778", "138.747", "138.716", "138.685", "138.654", "138.623", "138.592", "138.561", "138.530", "138.499",
            "138.468", "138.437", "138.406", "138.375", "138.344", "138.313", "138.282", "138.251", "138.220"],
        priceStart: 7, priceStep: 21.15, priceX: 54,
        scale: [[441, "1,42B"], [468, "708,36M"]],
        tags: [[213, "138.506", "#f4dc20", "#000", true], [261, "138.436", "#b4bccb", "#000", true], [289, "138.395", "#0b940e", "#fff"],
            [306, "138.370", "#fff", "#000", true], [392, "138.245", "#f000f4", "#300030"], [480, "416,22M", "#b400c0", "#fff", true]],
        thumb: [177, 73], cursor: true,
        hours: [[34, "16:35"], [94, "16:55"], [153, "17:15"], [213, "17:35"], [272, "17:55"]],
        hourTag: [262, "20/08/2024 18:15"]
    }
};

const tools = ["arrow*", "cross", "eraser", "-", "hand*", "magnet", "-", "eye+", "watch+", "note+", "A+", "-", "brush+", "-",
    "line", "segment", "ray", "zigzag", "channel", "hline", "hlines", "range", "waves", "-", "text"];
const lastTools = { wdo: ["-", "fib", "-", "square"], win: ["greenup", "-", "fib"] };

function rect(x, y, w, h, fill, extra = "") {
    return `<rect x="${x}" y="${y}" width="${w}" height="${h}" fill="${fill}" ${extra}/>`;
}

function drawChart(c) {
    let out = `<text class="watermark" x="50%" y="${c.markY}" style="font-size:${c.size}px">${c.name}</text>`;
    out += `<text class="name" x="50%" y="242">${c.company}</text>`;
    [433, 446, 461, 474, 488].forEach(y => out += rect(0, y, "100%", 1, "#0f2a4a"));

    // volume
    c.volume.forEach(([top, color], i) => {
        out += rect(Math.round(c.volumeStart + i * c.step), top, c.bar, 489 - top, colors[color]);
    });

    // market profile, anchored on the right edge
    out += `<svg x="100%" overflow="visible">`;
    c.profile.forEach(([y, w], i) => {
        const next = c.profile[i + 1];
        if (!next) return;
        const fill = y < c.turn ? (w > 20 ? "#c0678c" : PINK) : (w > 20 ? "#7286c8" : BLUE);
        out += rect(-w, y, w, next[0] - y, fill);
    });
    if (c.peak) out += rect(-c.peak[1], c.peak[0], c.peak[1], 4, "#c4d83c");
    out += `</svg>`;

    c.lines.forEach(([y, color, w = "100%", h = 1]) => out += rect(0, y, w, h, color));
    c.candles.forEach(([x, color, high, open, close, low]) => {
        const fill = colors[color];
        out += rect(x, high, 1, low - high, fill);
        out += rect(x - (c.body - 1) / 2, open, c.body, close - open, fill);
    });
    c.counts.forEach(([x, y, n]) => out += `<text class="count" x="${x}" y="${y + 5}">${n}</text>`);
    c.letters.forEach(([x, y, l]) => out += `<text class="letter" x="${x}" y="${y + 5}">${l}</text>`);
    c.texts.forEach(([x, y, t, color, cls]) => out += `<text class="${cls || ""}" x="${x}" y="${y}" style="fill:${color}">${t}</text>`);
    c.downs.forEach(([x, y, color]) => out += `<path d="M${x - 3} ${y}h6v6h3l-6 6-6-6h3z" fill="${color}"/>`);
    c.ups.forEach(([x, y, color]) => out += `<path d="M${x} ${y}l6 6h-3v5h-6v-5h-3z" fill="${color}"/>`);
    c.triangles.forEach(([x, y, color]) => out += `<path d="M${x} ${y - 4}l5 4-5 4z" fill="${color}"/>`);
    c.dots.forEach(([x, color]) => out += `<circle cx="${x}" cy="409" r="3" fill="${color}"/>`);

    if (c.cursor) {
        out += `<path d="M329 262v17l4-4 3 6 3-1-3-7h5z" fill="#fff" stroke="#111" stroke-width=".5"/>`;
        out += `<svg x="340" y="273" width="18" height="18"><use href="#hand"/></svg>`;
        out += `<svg x="100%" overflow="visible"><path d="M-20 258v-3h3m6 0h3v3m0 6v3h-3m-6 0h-3v-3M-14 257v8m-4-4h8" fill="none" stroke="#fff" stroke-width="1.5"/></svg>`;
    }
    return out;
}

function drawAxis(c) {
    let out = "";
    c.prices.forEach((p, i) => out += `<text x="${c.priceX}" y="${Math.round(c.priceStart + i * c.priceStep) + 4}">${p}</text>`);
    c.scale.forEach(([y, t]) => out += `<text x="64" y="${y + 4}">${t}</text>`);
    out += rect(58, c.thumb[0], 11, c.thumb[1], "#3b3d48");
    c.tags.forEach(([y, t, bg, color, full]) => {
        if (full) out += `<path d="M-5 ${y}l7-7h67v14H2z" fill="${bg}"/>`;
        else out += rect(0, y - 7, c.fold ? 59 : 69, 14, bg, `rx="3"`);
        out += `<text class="tag" x="3" y="${y + 4}" style="fill:${color}">${t}</text>`;
    });
    if (c.fold) out += `<path d="M65 210l-3 3 3 3" fill="none" stroke="#ccc" stroke-width="1.5"/>`;
    return out;
}

function drawHours(c) {
    let out = c.hours.map(([x, t]) => `<text x="${x}" y="15">${t}</text>`).join("");
    if (c.hourTag) {
        const [x, t] = c.hourTag;
        out += rect(x, 4, 112, 14, "#b9bec9", `rx="3"`);
        out += `<text class="tag" x="${x + 56}" y="15" style="fill:#111">${t}</text>`;
    }
    return out;
}

function drawTools(list) {
    return list.map(t => {
        if (t == "-") return "<hr>";
        const id = t.replace(/[*+]/, "");
        const icon = id == "A" ? `<span class="letter">A</span>` : `<svg><use href="#${id}"/></svg>`;
        const drop = t.includes("+") ? `<button class="drop" aria-label="Opções"><svg><use href="#caret"/></svg></button>` : "";
        return `<div><button class="tool${t.includes("*") ? " on" : ""}" aria-label="${id}">${icon}</button>${drop}</div>`;
    }).join("");
}

document.querySelectorAll(".panel").forEach(panel => {
    const key = panel.dataset.chart;
    const chart = charts[key];

    ["timeframes", "controls", "scroll"].forEach(name => {
        panel.querySelector("." + name).append(document.querySelector("#" + name).content.cloneNode(true));
    });
    panel.querySelector("aside").innerHTML = drawTools(tools.concat(lastTools[key])) +
        `<button class="last" aria-label="Mais"><svg><use href="#more"/></svg></button>`;
    panel.querySelector(".drawing").innerHTML = drawChart(chart);
    panel.querySelector(".axis svg").innerHTML = drawAxis(chart);
    panel.querySelector(".hours").innerHTML = drawHours(chart);
});
```
